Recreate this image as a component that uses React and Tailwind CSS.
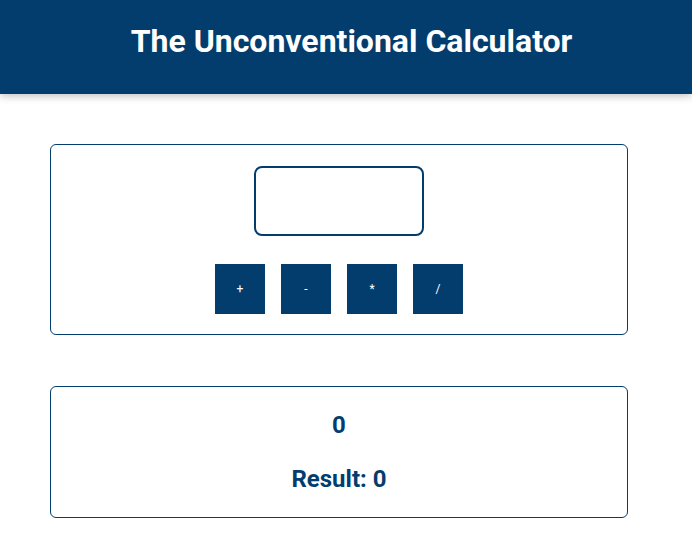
export default function App() {
    const ops = ['+', '-', '*', '/']

    return (
        <div className="min-h-[552px] bg-white font-['Roboto',sans-serif]">
            {/* Header */}
            <header className="h-[94px] bg-[#033d6e] flex items-center justify-center pl-[11px] pb-[12px] shadow-[0_2px_8px_rgba(0,0,0,0.25)]">
                <h1 className="text-white text-[32px] font-bold">The Unconventional Calculator</h1>
            </header>

            {/* Input card */}
            <section className="ml-[50px] mt-[50px] w-[578px] border border-[#033d6e] rounded-md pt-[21px] pb-[20px] flex flex-col items-center">
                <input
                    type="number"
                    className="w-[170px] h-[70px] border-2 border-[#033d6e] rounded-lg outline-none px-2"
                />
                <div className="mt-[28px] flex gap-4">
                    {ops.map((op) => (
                        <button
                            key={op}
                            className="w-[50px] h-[50px] bg-[#033d6e] text-white text-xs"
                        >
                            {op}
                        </button>
                    ))}
                </div>
            </section>

            {/* Result card */}
            <section className="ml-[50px] mt-[51px] w-[578px] border border-[#033d6e] rounded-md pt-[26px] pb-[26px] flex flex-col items-center gap-[30px] text-[#033d6e]">
                <h2 className="text-2xl font-bold leading-6">0</h2>
                <h2 className="text-2xl font-bold leading-6">Result: 0</h2>
            </section>
        </div>
    )
}
